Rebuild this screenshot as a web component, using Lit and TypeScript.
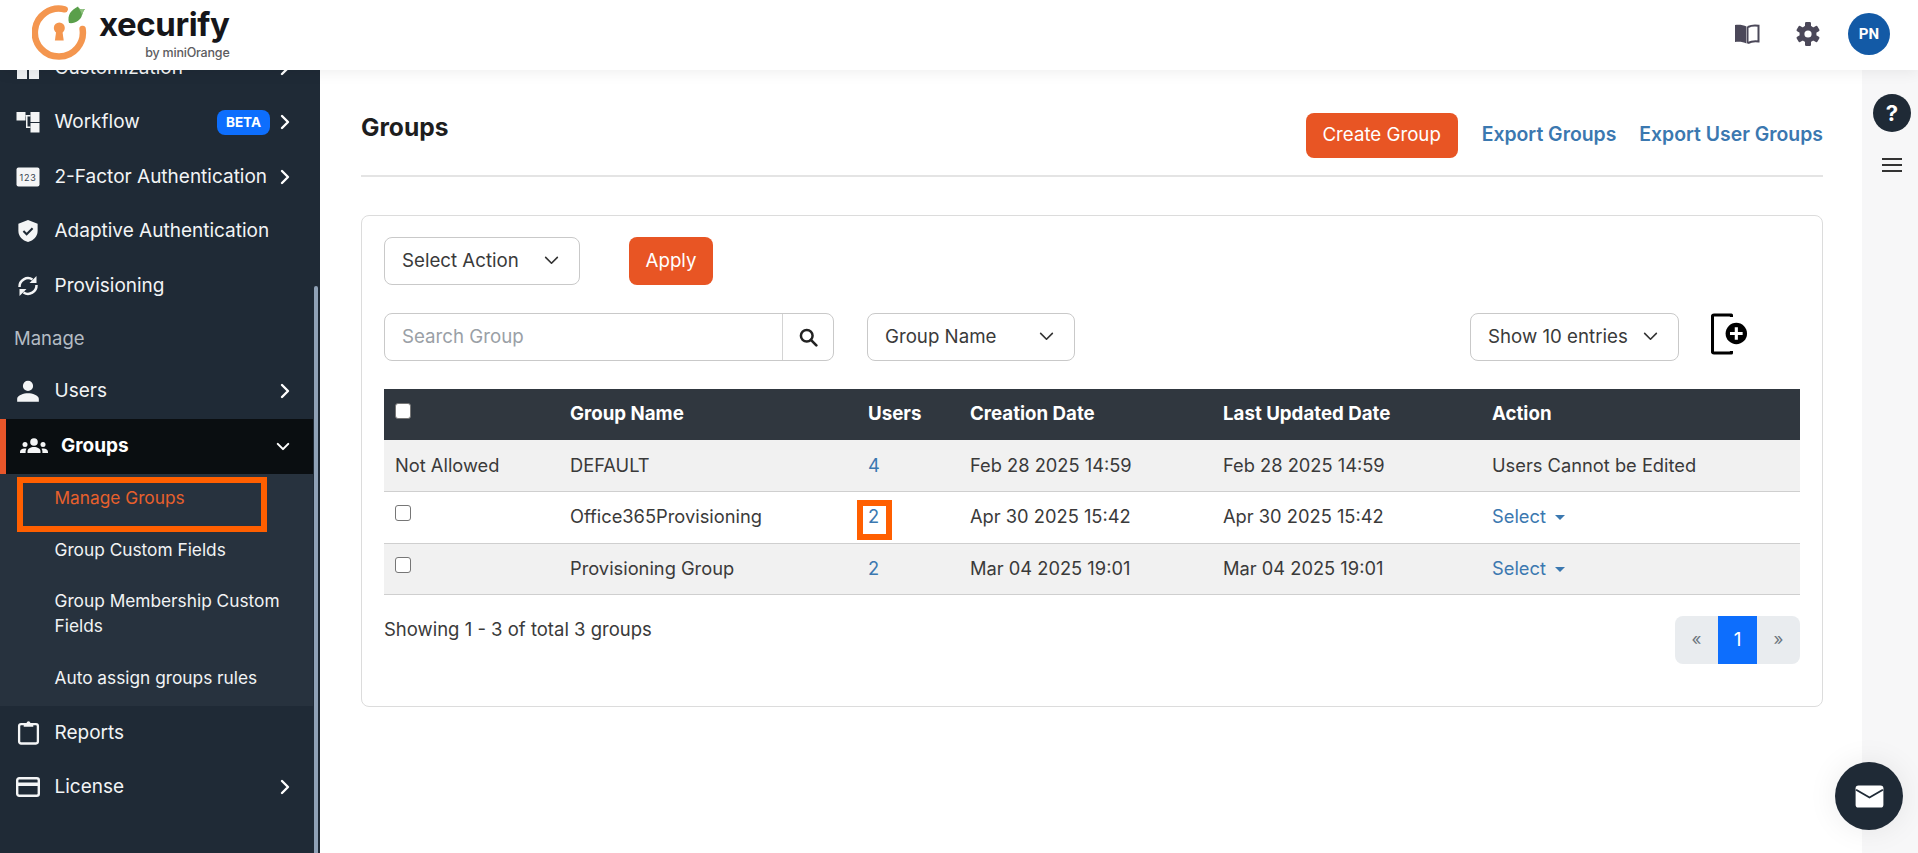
import { LitElement, html, css } from "lit";
import { customElement } from "lit/decorators.js";

const chevR = html`<svg class="chev" viewBox="0 0 10 16" width="10" height="16"><path d="M2 2l6 6-6 6" fill="none" stroke="#fff" stroke-width="2.4" stroke-linecap="round" stroke-linejoin="round"/></svg>`;
const chevD = html`<svg class="chev" viewBox="0 0 16 10" width="14" height="9"><path d="M2 2l6 6 6-6" fill="none" stroke="#fff" stroke-width="2.4" stroke-linecap="round" stroke-linejoin="round"/></svg>`;
const selChev = html`<svg viewBox="0 0 16 10" width="15" height="9"><path d="M1.5 1.5L8 8l6.5-6.5" fill="none" stroke="#333" stroke-width="1.8" stroke-linecap="round" stroke-linejoin="round"/></svg>`;

const icons: Record<string, any> = {
  custom: html`<svg viewBox="0 0 24 24" width="24" height="24" fill="#eef1f3"><rect x="1" y="1" width="10" height="22"/><rect x="13" y="1" width="10" height="22"/></svg>`,
  flow: html`<svg viewBox="0 0 24 22" width="24" height="22" fill="#f4f5f6"><rect x="0.5" y="1" width="9" height="8.5"/><rect x="14.5" y="1" width="9" height="10"/><rect x="14.5" y="12" width="9" height="9.5"/><path d="M9.5 4h5v1.5h-3v10h3v1.5H10V5.5H9.5z"/></svg>`,
  tfa: html`<svg viewBox="0 0 24 20" width="24" height="20"><rect x="0.5" y="0.5" width="23" height="19" rx="2" fill="#f4f5f6"/><text x="12" y="14" text-anchor="middle" font-family="Inter, sans-serif" font-size="9" letter-spacing=".7" fill="#33404c">123</text></svg>`,
  shield: html`<svg viewBox="0 0 24 26" width="22" height="24"><path d="M12 1l10.5 4v8c0 6-4.5 10.5-10.5 12C6 23.5 1.5 19 1.5 13V5z" fill="#f4f5f6"/><path d="M7 13l3.5 3.5L17 10" fill="none" stroke="#1f2a36" stroke-width="2.2"/></svg>`,
  sync: html`<svg viewBox="0 0 24 24" width="24" height="24"><path d="M3.5 13A8.5 8.5 0 0 1 16.5 5.5" fill="none" stroke="#f4f5f6" stroke-width="2.5"/><path d="M20.5 2v7h-7z" fill="#f4f5f6"/><g transform="rotate(180 12 12)"><path d="M3.5 13A8.5 8.5 0 0 1 16.5 5.5" fill="none" stroke="#f4f5f6" stroke-width="2.5"/><path d="M20.5 2v7h-7z" fill="#f4f5f6"/></g></svg>`,
  user: html`<svg viewBox="0 0 24 24" width="26" height="26" fill="#f4f5f6"><path d="M12 12a4.7 4.7 0 1 0 0-9.4 4.7 4.7 0 0 0 0 9.4zm0 2c-3.8 0-10 1.8-10 5.2V22h20v-2.8c0-3.4-6.2-5.2-10-5.2z"/></svg>`,
  groups: html`<svg viewBox="0 0 28 18" width="28" height="18" fill="#f4f5f6"><circle cx="14" cy="5" r="3.8"/><path d="M7.5 16v-1.5c0-3 3-4.5 6.5-4.5s6.5 1.5 6.5 4.5V16z"/><circle cx="5" cy="7.5" r="2.5"/><path d="M0 16v-1c0-2 1.8-3.5 4.5-3.5.8 0 1.5.1 2 .3-.6.8-.9 1.7-.9 2.7V16z"/><circle cx="23" cy="7.5" r="2.5"/><path d="M28 16v-1c0-2-1.8-3.5-4.5-3.5-.8 0-1.5.1-2 .3.6.8.9 1.7.9 2.7V16z"/></svg>`,
  report: html`<svg viewBox="0 0 24 26" width="23" height="25"><rect x="2.2" y="4.2" width="19.6" height="20.3" rx="2" fill="none" stroke="#f4f5f6" stroke-width="2.4"/><path d="M7 7V3.5h2.800c.4-1.300 1.200-2.200 2.200-2.200s1.800.9 2.200 2.200H17V7z" fill="#f4f5f6"/></svg>`,
  card: html`<svg viewBox="0 0 24 20" width="24" height="20"><rect x="1.2" y="1.2" width="21.6" height="17.6" rx="2" fill="none" stroke="#f4f5f6" stroke-width="2.4"/><rect x="1.2" y="5.5" width="21.6" height="3.5" fill="#f4f5f6"/></svg>`,
};

type Item = { icon: string; label: string; more?: boolean; beta?: boolean };
const top: Item[] = [
  { icon: "flow", label: "Workflow", more: true, beta: true },
  { icon: "tfa", label: "2-Factor Authentication", more: true },
  { icon: "shield", label: "Adaptive Authentication" },
  { icon: "sync", label: "Provisioning" },
];
const rows = [
  { sel: "Not Allowed", name: "DEFAULT", users: "4", created: "Feb 28 2025 14:59", updated: "Feb 28 2025 14:59", action: "Users Cannot be Edited" },
  { sel: "", name: "Office365Provisioning", users: "2", mark: true, created: "Apr 30 2025 15:42", updated: "Apr 30 2025 15:42", action: "" },
  { sel: "", name: "Provisioning Group", users: "2", created: "Mar 04 2025 19:01", updated: "Mar 04 2025 19:01", action: "" },
];

@customElement("app-root")
export class AppRoot extends LitElement {
  static styles = css`
    :host { display: block; width: 100%; height: 100vh; overflow: hidden; font-family: Inter, "Noto Sans", sans-serif; font-size: 18.7px; color: #3a3a3a; background: #fff; }
    * { box-sizing: border-box; }
    .shell { display: flex; flex-direction: column; height: 100%; }

    .hdr { height: 70px; flex: none; display: flex; align-items: center; background: #fff; position: relative; z-index: 3; box-shadow: 0 2px 14px rgba(0,0,0,.07); padding: 0 28px 6px 32px; }
    .logo { display: flex; align-items: flex-start; gap: 7px; }
    .brand { display: flex; flex-direction: column; align-items: flex-end; padding-top: 3px; }
    .brand b { font: 700 33px/38px Inter, sans-serif; color: #16161a; letter-spacing: -0.4px; }
    .brand small { font: 500 12.5px/14px Inter, sans-serif; color: #5c5c60; letter-spacing: -0.2px; margin-top: 3px; }
    .hdr-right { margin-left: auto; display: flex; align-items: center; padding-top: 3px; }
    .book { margin-right: 36px; display: flex; }
    .gear { margin-right: 28px; display: flex; }
    .avatar { width: 42px; height: 42px; border-radius: 50%; background: #135aa6; color: #fff; font: 700 15px Roboto, sans-serif; display: flex; align-items: center; justify-content: center; }

    .body { flex: 1; min-height: 0; display: flex; }
    .side { width: 320px; flex: none; background: #1f2a36; overflow: hidden; position: relative; color: #f2f4f5; font-size: 19px; }
    .menu { width: 313px; margin-top: -29.5px; }
    .row { height: 54.5px; display: flex; align-items: center; padding-left: 15px; padding-right: 23px; }
    .ic { width: 26px; display: flex; justify-content: center; flex: none; margin-right: 13.5px; }
    .grow { flex: 1; white-space: nowrap; padding-bottom: 1px; }
    .beta { background: #0d6efd; color: #fff; font: 700 13.5px Inter, sans-serif; border-radius: 8px; width: 53px; height: 25px; display: flex; align-items: center; justify-content: center; margin-right: 10px; }
    .chev { flex: none; }
    .head { height: 51px; display: flex; align-items: center; padding: 0 0 2px 14px; color: #b4bcc4; font-size: 18.5px; }
    .active { height: 55px; background: #0a0e11; border-left: 6px solid #e8562a; padding-left: 14px; font-weight: 700; color: #fff; }
    .active .ic { width: 28px; margin-right: 13px; }
    .sub { background: #27323e; height: 232px; display: flex; flex-direction: column; position: relative; }
    .sub div { padding: 0 16px 3px 54.5px; display: flex; align-items: center; font-size: 17.3px; }
    .s1 { height: 51.5px; color: #e8602c; }
    .s2 { height: 51px; }
    .s3 { height: 77px; line-height: 25px; }
    .s4 { height: 52.5px; }
    .box { position: absolute; left: 17px; top: 3px; width: 250px; height: 55px; border: 6px solid #ff5f00; }
    .thumb { position: absolute; right: 2px; top: 216px; bottom: 0; width: 4px; background: #8fa1b6; border-radius: 2px 2px 0 0; }

    .main { flex: 1; min-width: 0; padding: 43px 39px 0 41px; }
    .pagehead { display: flex; align-items: center; padding-bottom: 17px; border-bottom: 2px solid #e4e4e4; }
    h1 { margin: 0 auto 0 0; align-self: flex-start; font-size: 24.6px; line-height: 28px; font-weight: 700; color: #1e1e1e; }
    .btn { background: #e85524; color: #fff; border-radius: 8px; height: 45px; display: flex; align-items: center; justify-content: center; padding-bottom: 2px; }
    .create { width: 152px; }
    .exp { color: #3b78b0; font-weight: 600; margin-left: 24px; font-size: 19.4px; padding-bottom: 3px; }
    .exp + .exp { margin-left: 23px; }
    .card { margin-top: 38px; border: 1px solid #dcdcdc; border-radius: 8px; padding: 21px 22px 42px; height: 492px; }
    .line { display: flex; align-items: stretch; height: 48px; margin-bottom: 28px; }
    .sel { border: 1px solid #c9c9c9; border-radius: 8px; display: flex; align-items: center; justify-content: space-between; padding: 0 20px 2px 17px; background: #fff; }
    .a1 { width: 196px; }
    .apply { width: 84px; height: 48px; margin-left: 49px; }
    .search { width: 450px; border: 1px solid #c9c9c9; border-radius: 8px; display: flex; }
    .ph { flex: 1; padding: 0 0 2px 17px; display: flex; align-items: center; color: #9aa0a6; }
    .mag { width: 51px; border-left: 1px solid #d4d4d4; display: flex; align-items: center; justify-content: center; }
    .gname { width: 208px; margin-left: 33px; }
    .show { width: 209px; margin-left: auto; }
    .addico { margin: 0 52px 0 32px; display: flex; }
    table { width: 100%; border-collapse: collapse; table-layout: fixed; }
    th { background: #30373f; color: #fff; font-weight: 700; text-align: left; height: 51px; padding: 0 11px 2px; }
    td { height: 51.5px; padding: 0 11px 2px; border-bottom: 1px solid #cfcfcf; position: relative; white-space: nowrap; font-size: 18.3px; }
    tbody tr:nth-child(odd) td { background: #f1f1f1; }
    .cb { appearance: none; width: 16px; height: 16px; margin: 0 0 6px; border: 1px solid #767676; border-radius: 3px; background: #fff; display: block; }
    .link { color: #3b78b0; }
    .caret { display: inline-block; border-top: 5px solid #3b78b0; border-left: 5px solid transparent; border-right: 5px solid transparent; margin-left: 9px; vertical-align: 3px; }
    .mark { position: absolute; left: 0; top: 8px; width: 35px; height: 40px; border: 6px solid #ff5f00; }
    .foot { display: flex; justify-content: space-between; align-items: flex-start; margin-top: 21px; }
    .foot .txt { margin-top: 2px; font-size: 18.5px; }
    .pager { display: flex; height: 48px; background: #e9ecef; border-radius: 8px; overflow: hidden; width: 125px; color: #6c757d; font-size: 17px; }
    .pager span { display: flex; align-items: center; justify-content: center; flex: 1; padding-bottom: 2px; }
    .pager .on { flex: none; width: 39px; background: #0d6efd; color: #fff; font-size: 19px; }

    .strip { width: 56px; flex: none; background: #f7f7f8; display: flex; flex-direction: column; align-items: center; padding: 24px 0 0 4px; }
    .help { width: 38px; height: 38px; border-radius: 50%; background: #1f2a36; color: #fff; display: flex; align-items: center; justify-content: center; font: 700 22px Inter, sans-serif; }
    .burger { margin-top: 26px; width: 20px; height: 14px; border-top: 2px solid #333; border-bottom: 2px solid #333; position: relative; }
    .burger::after { content: ""; position: absolute; left: 0; right: 0; top: 4px; height: 2px; background: #333; }
    .bubble { position: absolute; left: 1835px; top: 762px; width: 68px; height: 68px; border-radius: 50%; background: #1f2a36; display: flex; align-items: center; justify-content: center; box-shadow: 0 0 30px rgba(0,0,0,.08); z-index: 4; }
  `;

  item(i: Item) {
    return html`<div class="row">
      <span class="ic">${icons[i.icon]}</span>
      <span class="grow">${i.label}</span>
      ${i.beta ? html`<span class="beta">BETA</span>` : ""}
      ${i.more ? chevR : ""}
    </div>`;
  }

  render() {
    return html`<div class="shell">
      <header class="hdr">
        <div class="logo">
          <svg viewBox="0 0 60 60" width="60" height="60">
            <path d="M32.7 7.3A24 24 0 1 0 50.6 27" fill="none" stroke="#f4964f" stroke-width="6.5" stroke-linecap="round"/>
            <circle cx="27.3" cy="26" r="5.5" fill="#f4964f"/>
            <path d="M24.5 27h5.6l1.6 11.5h-8.8z" fill="#f4964f"/>
            <path d="M37 21C35 13 39 8 46 4.5C47 7 49 8 53 7C51 9 51 11 50 13C49 18 43 22 37 21z" fill="#5a9f4b"/>
            <path d="M46 4.5C47 7 49 8 53 7C51 9 51 11 50 13C49 9 47 7 46 4.5z" fill="#8fc27f"/>
          </svg>
          <div class="brand"><b>xecurify</b><small>by miniOrange</small></div>
        </div>
        <div class="hdr-right">
          <span class="book"><svg viewBox="0 0 26 20" width="26" height="20"><path d="M12.5 2.5C9.5 .8 4.5.5 1 1v17c4-.5 8.5-.2 11.5 1.5z" fill="#4b4859"/><path d="M14 3c2.8-1.5 7-1.8 10.5-1.3V17.5c-3.5-.4-7.500-.1-10.500 1.500" fill="none" stroke="#4b4859" stroke-width="2"/><path d="M13 2.5h1.5v17H13z" fill="#4b4859"/></svg></span>
          <span class="gear"><svg viewBox="0 0 24 24" width="24" height="24" fill="#4b4859"><rect x="9" y="0" width="6" height="24" rx="1.2"/><rect x="9" y="0" width="6" height="24" rx="1.2" transform="rotate(60 12 12)"/><rect x="9" y="0" width="6" height="24" rx="1.2" transform="rotate(120 12 12)"/><circle cx="12" cy="12" r="8.5"/><circle cx="12" cy="12" r="3.6" fill="#fff"/></svg></span>
          <span class="avatar">PN</span>
        </div>
      </header>
      <div class="body">
        <aside class="side">
          <div class="menu">
            ${this.item({ icon: "custom", label: "Customization", more: true })}
            ${top.map((t) => this.item(t))}
            <div class="head">Manage</div>
            ${this.item({ icon: "user", label: "Users", more: true })}
            <div class="row active"><span class="ic">${icons.groups}</span><span class="grow">Groups</span>${chevD}</div>
            <div class="sub">
              <div class="s1">Manage Groups</div>
              <div class="s2">Group Custom Fields</div>
              <div class="s3">Group Membership Custom Fields</div>
              <div class="s4">Auto assign groups rules</div>
              <span class="box"></span>
            </div>
            ${this.item({ icon: "report", label: "Reports" })}
            ${this.item({ icon: "card", label: "License", more: true })}
          </div>
          <span class="thumb"></span>
        </aside>
        <main class="main">
          <div class="pagehead">
            <h1>Groups</h1>
            <span class="btn create">Create Group</span>
            <span class="exp">Export Groups</span>
            <span class="exp">Export User Groups</span>
          </div>
          <section class="card">
            <div class="line">
              <div class="sel a1"><span>Select Action</span>${selChev}</div>
              <span class="btn apply">Apply</span>
            </div>
            <div class="line">
              <div class="search"><span class="ph">Search Group</span><span class="mag"><svg viewBox="0 0 24 24" width="20" height="20"><circle cx="10.5" cy="10.5" r="7" fill="none" stroke="#222" stroke-width="3"/><path d="M15.5 15.5L22 22" stroke="#222" stroke-width="3.2" stroke-linecap="round"/></svg></span></div>
              <div class="sel gname"><span>Group Name</span>${selChev}</div>
              <div class="sel show"><span>Show 10 entries</span>${selChev}</div>
              <span class="addico"><svg viewBox="0 0 38 44" width="37" height="43"><path d="M21 4V2H3a1.5 1.5 0 0 0-1.5 1.5v36A1.5 1.5 0 0 0 3 41h18v-2" fill="none" stroke="#000" stroke-width="3.2" stroke-linejoin="round"/><circle cx="26" cy="21" r="11" fill="#000"/><path d="M26 14.5v13M19.5 21h13" stroke="#fff" stroke-width="3.2"/></svg></span>
            </div>
            <table>
              <colgroup><col style="width:175px"/><col style="width:298px"/><col style="width:102px"/><col style="width:253px"/><col style="width:269px"/><col/></colgroup>
              <thead><tr>
                <th><input type="checkbox" class="cb"/></th><th>Group Name</th><th>Users</th><th>Creation Date</th><th>Last Updated Date</th><th>Action</th>
              </tr></thead>
              <tbody>
                ${rows.map((r) => html`<tr>
                  <td>${r.sel ? r.sel : html`<input type="checkbox" class="cb"/>`}</td>
                  <td>${r.name}</td>
                  <td class="link">${r.users}${r.mark ? html`<span class="mark"></span>` : ""}</td>
                  <td>${r.created}</td>
                  <td>${r.updated}</td>
                  <td>${r.action ? r.action : html`<span class="link">Select<i class="caret"></i></span>`}</td>
                </tr>`)}
              </tbody>
            </table>
            <div class="foot">
              <span class="txt">Showing 1 - 3 of total 3 groups</span>
              <div class="pager"><span>«</span><span class="on">1</span><span>»</span></div>
            </div>
          </section>
        </main>
        <aside class="strip">
          <span class="help">?</span>
          <span class="burger"></span>
        </aside>
      </div>
      <span class="bubble"><svg viewBox="0 0 30 24" width="29" height="23"><rect x="0.5" y="0.5" width="29" height="23" rx="3" fill="#fff"/><path d="M1 5l14 8 14-8" fill="none" stroke="#1f2a36" stroke-width="2"/></svg></span>
    </div>`;
  }
}
